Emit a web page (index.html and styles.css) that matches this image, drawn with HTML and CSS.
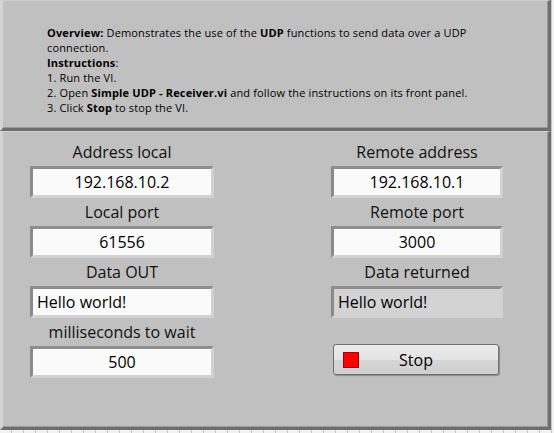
FILE: index.html
```html
<!DOCTYPE html>
<html lang="en">
<head>
  <meta charset="UTF-8" />
  <meta name="viewport" content="width=device-width, initial-scale=1" />
  <title>Simple UDP - Sender</title>
  <link rel="stylesheet" href="styles.css">
</head>
<body>
  <div class="frame">
    <section class="panel info">
      <div class="notes">
        <p><b>Overview:</b> Demonstrates the use of the <b>UDP</b> functions to send data over a UDP<br>connection.</p>
        <p><b>Instructions</b>:</p>
        <p>1. Run the VI.</p>
        <p>2. Open <b>Simple UDP - Receiver.vi</b> and follow the instructions on its front panel.</p>
        <p>3. Click <b>Stop</b> to stop the VI.</p>
      </div>
    </section>

    <section class="panel controls">
      <div class="field">
        <label>Address local</label>
        <div class="box">192.168.10.2</div>
      </div>
      <div class="field right">
        <label>Remote address</label>
        <div class="box">192.168.10.1</div>
      </div>

      <div class="field">
        <label>Local port</label>
        <div class="box">61556</div>
      </div>
      <div class="field right">
        <label>Remote port</label>
        <div class="box">3000</div>
      </div>

      <div class="field">
        <label>Data OUT</label>
        <div class="box text">Hello world!</div>
      </div>
      <div class="field right">
        <label>Data returned</label>
        <div class="box text indicator">Hello world!</div>
      </div>

      <div class="field">
        <label>milliseconds to wait</label>
        <div class="box">500</div>
      </div>
      <div class="field right stop-cell">
        <button class="stop"><span class="led"></span>Stop</button>
      </div>
    </section>
  </div>
</body>
</html>
```

FILE: styles.css
```css
body {
  margin: 0;
  width: 554px;
  height: 433px;
  overflow: hidden;
  font-family: "Open Sans", "Noto Sans", sans-serif;
  color: #000;
  background-color: #f2f2f2;
  background-image: repeating-linear-gradient(90deg, transparent 0 11px, #c8c8c8 11px 12px);
}
.frame {
  width: 551px;
  height: 430px;
  display: flex;
  flex-direction: column;
  background: #c0c0c0;
}
.panel {
  box-sizing: border-box;
  background: #c0c0c0;
  border-left: 3px solid #d4d4d4;
  border-top: 1px solid #cfcfcf;
  border-right: 3px solid #6e6e6e;
  border-bottom: 3px solid #6e6e6e;
  box-shadow: inset -1px -1px 0 #9a9a9a;
}
.info {
  height: 131px;
  padding: 24px 0 0 44px;
  font-size: 11px;
  letter-spacing: 0.15px;
  line-height: 15px;
}
.notes {
  width: 440px;
}
.notes p {
  margin: 0;
}
.controls {
  flex: 1;
  display: grid;
  grid-template-columns: 184px 172px;
  grid-auto-rows: 56px;
  column-gap: 117px;
  row-gap: 4px;
  padding: 10px 0 0 27px;
}
.field {
  display: flex;
  flex-direction: column;
  align-items: center;
}
.field label {
  font-size: 16px;
  line-height: 20px;
  height: 20px;
  margin-bottom: 4px;
  color: #111;
}
.box {
  box-sizing: border-box;
  width: 100%;
  height: 32px;
  border-top: 3px solid #8e8e8e;
  border-left: 3px solid #8a8a8a;
  border-bottom: 3px solid #d2d2d2;
  border-right: 3px solid #d2d2d2;
  background: #fafafa;
  font-size: 16px;
  line-height: 26px;
  text-align: center;
}
.box.text {
  text-align: left;
  padding-left: 4px;
}
.box.indicator {
  background: #d3d3d3;
}
.stop-cell {
  align-items: flex-start;
}
.stop {
  position: relative;
  width: 166px;
  height: 31px;
  margin: 22px 0 0 2px;
  padding: 0;
  border: 1px solid #6f6f6f;
  border-radius: 3px;
  background: linear-gradient(#ececec 0%, #e4e4e4 50%, #d6d6d6 51%, #d0d0d0 100%);
  box-shadow: 1px 1px 1px #8a8a8a;
  font-family: "Open Sans", "Noto Sans", sans-serif;
  font-size: 16px;
  color: #000;
  cursor: pointer;
}
.led {
  position: absolute;
  left: 9px;
  top: 7px;
  width: 14px;
  height: 14px;
  background: #ff0000;
  border: 1px solid #a00018;
}
```
